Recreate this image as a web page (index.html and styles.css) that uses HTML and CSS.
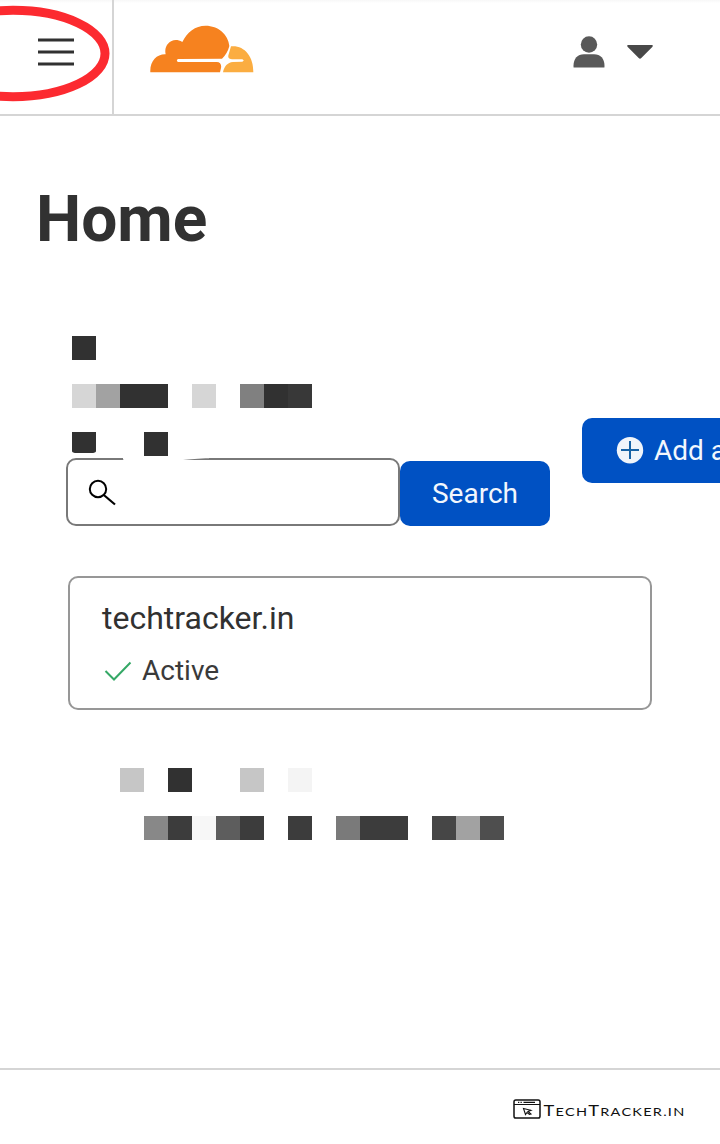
FILE: index.html
```html
<!DOCTYPE html>
<html lang="en">
<head>
<meta charset="utf-8">
<title>Home</title>
<link rel="stylesheet" href="styles.css">
</head>
<body>
<div class="page">
  <header class="header">
    <button class="menu" aria-label="Menu">
      <svg width="36" height="30" viewBox="0 0 36 30"><path d="M0 2h36M0 14h36M0 26h36" stroke="#313131" stroke-width="3"/></svg>
    </button>
    <svg class="cloud" width="104" height="48" viewBox="30 45 312 144">
      <path fill="#f6821f" d="M31 187C29 154 50 132 77 133C70 106 96 78 127 96C142 66 165 47 197 47C234 47 265 73 268 108C264 123 257 137 246 146L114 147Q107 151 114 156L230 156C241 156 245 164 243 174L240 187Z"/>
      <path fill="#fbad41" d="M273 109C311 105 341 137 340 187L249 187C253 168 262 158 279 156L307 155Q315 152 307 148L276 148C265 147 263 142 266 133Z"/>
    </svg>
    <div class="account">
      <svg width="32" height="34" viewBox="0 0 32 34" fill="#595959"><circle cx="16" cy="8.500" r="8.200"/><path d="M.6 31.500C-.2 23.500 4 18.200 11 18.200h10c7 0 11.200 5.300 10.400 13.300Z"/></svg>
      <svg width="28" height="16" viewBox="0 0 28 16"><path d="M2 1h24q1.500.3.500 1.800L15.300 14q-1.300 1.300-2.600 0L1.500 2.800Q.500 1.300 2 1Z" fill="#484848"/></svg>
    </div>
    <svg class="marker" width="112" height="104" viewBox="0 0 112 104"><ellipse cx="13" cy="53.500" rx="92" ry="43.200" fill="none" stroke="#fc2a30" stroke-width="9"/></svg>
  </header>

  <main class="main">
    <h1 class="title">Home</h1>
    <section class="tools">
      <div class="lookup">
        <div class="mosaic">
          <i class="c1 r1 ink"></i>
          <i class="c1 r2 pale"></i><i class="c2 r2 mid"></i><i class="c3 r2 ink"></i><i class="c4 r2 ink"></i><i class="c6 r2 pale"></i><i class="c8 r2 gray"></i><i class="c9 r2 ink"></i><i class="c10 r2 ink2"></i>
          <i class="c1 r3 ink torn"></i><i class="c4 r3 ink"></i>
        </div>
        <form class="search">
          <div class="field">
            <svg width="28" height="28" viewBox="0 0 28 28" fill="none" stroke="#000"><circle cx="10" cy="10" r="8.200" stroke-width="2"/><path d="M15.800 16 27 25.500" stroke-width="2.200"/></svg>
            <svg class="gap" width="86" height="4" viewBox="0 0 86 4"><path d="M0 0H86V.3C76 .5 66 1.300 60 2V4H4Q3 2 0 1.500Z" fill="#fff"/></svg>
          </div>
          <button class="btn submit" type="button">Search</button>
        </form>
      </div>
      <button class="btn add" type="button">
        <svg width="28" height="28" viewBox="0 0 28 28"><circle cx="14" cy="13.200" r="13.200" fill="#f0f5fa"/><path d="M14 4v18M5 13h18" stroke="#1763a5" stroke-width="2"/></svg>
        <span>Add a</span>
      </button>
    </section>
    <a class="card">
      <span class="domain">techtracker.in</span>
      <span class="status">
        <svg width="28" height="22" viewBox="0 0 28 22"><path d="M1.500 11 10 19.500 26.500 2.500" fill="none" stroke="#35a866" stroke-width="2"/></svg>
        <span>Active</span>
      </span>
    </a>
    <div class="mosaic lower">
      <i class="c1 r1 silver"></i><i class="c3 r1 ink"></i><i class="c6 r1 silver"></i><i class="c8 r1 faint"></i>
      <i class="c2 r2 gray2"></i><i class="c3 r2 char"></i><i class="c4 r2 white"></i><i class="c5 r2 slate"></i><i class="c6 r2 char"></i><i class="c8 r2 char"></i><i class="c10 r2 gray3"></i><i class="c11 r2 char"></i><i class="c12 r2 char"></i><i class="c14 r2 coal"></i><i class="c15 r2 mid"></i><i class="c16 r2 coal2"></i>
    </div>
  </main>

  <footer class="footer">
    <svg width="172" height="24" viewBox="0 0 172 24">
      <rect x="1" y="2" width="26" height="18" rx="1.800" fill="none" stroke="#111" stroke-width="1.500"/>
      <path d="M1 6.500h26" stroke="#111" stroke-width="1"/>
      <path d="M5 4.400h1.300M7.500 4.400h1.300M10.500 4.400H22" stroke="#111" stroke-width="1.200"/>
      <path d="M10.500 10.500 18 12.300 15 13.500 18 16 16.500 16.500 14 14.500 12.500 16.500Z" fill="none" stroke="#111" stroke-width="1.100"/>
      <text class="brand" x="30.500" y="17.500" textLength="142" lengthAdjust="spacingAndGlyphs">T<tspan class="small">ECH</tspan>T<tspan class="small">RACKER.IN</tspan></text>
    </svg>
  </footer>
</div>
</body>
</html>
```

FILE: styles.css
```css
* { box-sizing: border-box; }
body { margin: 0; background: #fff; color: #313131; font-family: Roboto, "Liberation Sans", sans-serif; overflow: hidden; }
svg { display: block; flex: none; }
button { margin: 0; border: 0; font: inherit; }
.page { width: 720px; height: 1144px; display: flex; flex-direction: column; overflow: hidden; }

.header { position: relative; display: flex; height: 116px; border-bottom: 2px solid #d5d5d5; background: linear-gradient(#f7f7f7, #fff 3px); }
.menu { width: 114px; padding: 38px 0 0 38px; border-right: 2px solid #d5d5d5; background: none; display: flex; align-items: flex-start; }
.cloud { margin: 25px 0 0 36px; }
.account { display: flex; gap: 21px; margin: 36px 66px 0 auto; }
.account svg:last-child { margin-top: 8px; }
.marker { position: absolute; left: 0; top: 0; pointer-events: none; }

.main { flex: 1; padding: 72px 0 0 36px; }
.title { margin: 0 0 84px; font-size: 64px; line-height: 64px; font-weight: 700; }
.tools { display: flex; gap: 32px; padding-left: 30px; }
.lookup { width: 484px; flex: none; }
.mosaic { display: grid; grid-template-columns: repeat(16, 24px); grid-auto-rows: 24px; row-gap: 24px; margin-left: 6px; }
.search { display: flex; align-items: flex-end; margin-top: 2px; }
.field { position: relative; width: 334px; height: 68px; padding: 19px 0 0 20px; border: 2px solid #797979; border-radius: 10px; }
.gap { position: absolute; left: 55px; top: -2px; }
.btn { height: 65px; background: #0051c3; color: #f2f7fd; font-size: 28px; line-height: 65px; border-radius: 10px; padding: 0; }
.submit { width: 150px; }
.add { display: flex; align-items: center; gap: 10px; flex: none; width: 250px; margin-top: 82px; padding-left: 34px; white-space: nowrap; }
.card { display: flex; flex-direction: column; width: 584px; height: 134px; margin: 50px 0 58px 32px; padding: 22px 32px; border: 2px solid #979797; border-radius: 10px; }
.domain { font-size: 32px; line-height: 36px; }
.status { display: flex; align-items: center; gap: 10px; margin-top: 17px; padding-left: 2px; font-size: 28px; line-height: 36px; color: #3a3a3a; }
.lower { margin-left: 84px; }

.footer { height: 76px; border-top: 2px solid #d5d5d5; padding: 28px 35px 0 0; display: flex; justify-content: flex-end; }
.brand { font-family: Lato, sans-serif; font-size: 14.500px; fill: #111; letter-spacing: 1px; }
.small { font-size: 11.500px; }

.r1 { grid-row: 1; } .r2 { grid-row: 2; } .r3 { grid-row: 3; }
.c1 { grid-column: 1; } .c2 { grid-column: 2; } .c3 { grid-column: 3; } .c4 { grid-column: 4; }
.c5 { grid-column: 5; } .c6 { grid-column: 6; } .c8 { grid-column: 8; } .c9 { grid-column: 9; }
.c10 { grid-column: 10; } .c11 { grid-column: 11; } .c12 { grid-column: 12; } .c14 { grid-column: 14; }
.c15 { grid-column: 15; } .c16 { grid-column: 16; }
.ink { background: #313131; } .ink2 { background: #383838; } .pale { background: #d6d6d6; }
.mid { background: #a2a2a2; } .gray { background: #808080; } .silver { background: #c6c6c6; }
.faint { background: #f4f4f4; } .white { background: #f7f7f7; } .gray2 { background: #888; }
.gray3 { background: #7a7a7a; } .slate { background: #5d5d5d; } .char { background: #3c3c3c; }
.coal { background: #464646; } .coal2 { background: #4e4e4e; }
.torn { height: 21px; border-radius: 0 0 5px 5px / 0 0 2px 2px; }
```
